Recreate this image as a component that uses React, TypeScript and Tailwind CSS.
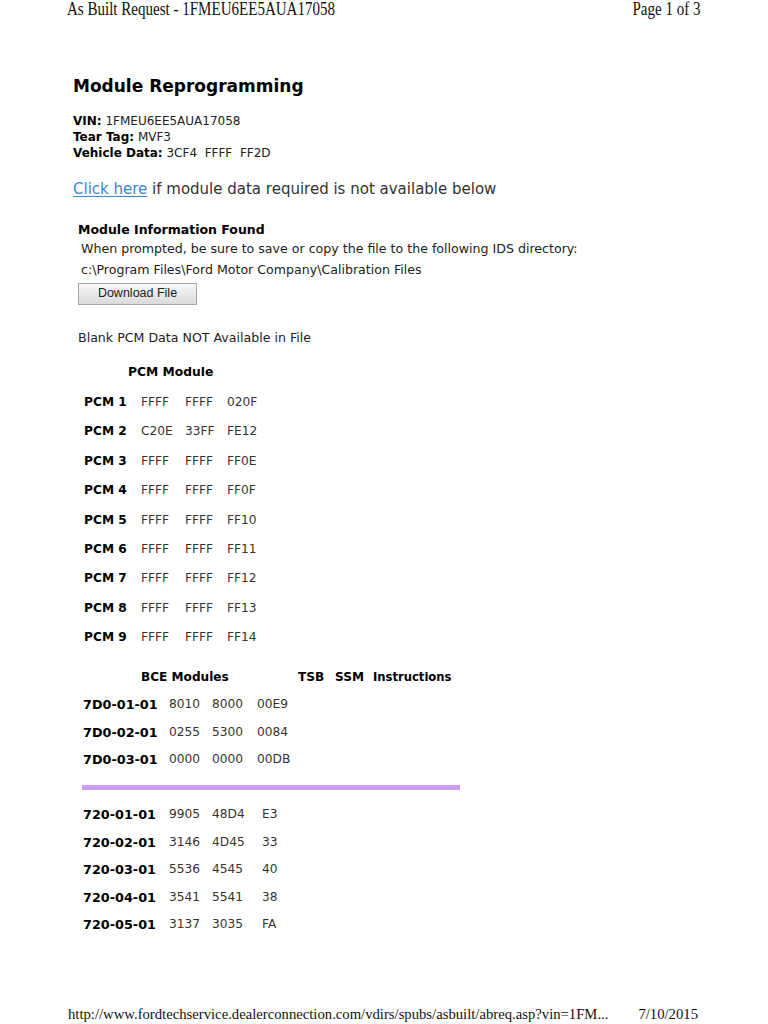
const pcmRows: [string, string, string, string][] = [
  ["PCM 1", "FFFF", "FFFF", "020F"],
  ["PCM 2", "C20E", "33FF", "FE12"],
  ["PCM 3", "FFFF", "FFFF", "FF0E"],
  ["PCM 4", "FFFF", "FFFF", "FF0F"],
  ["PCM 5", "FFFF", "FFFF", "FF10"],
  ["PCM 6", "FFFF", "FFFF", "FF11"],
  ["PCM 7", "FFFF", "FFFF", "FF12"],
  ["PCM 8", "FFFF", "FFFF", "FF13"],
  ["PCM 9", "FFFF", "FFFF", "FF14"]
];

const bceRows: [string, string, string, string][] = [
  ["7D0-01-01", "8010", "8000", "00E9"],
  ["7D0-02-01", "0255", "5300", "0084"],
  ["7D0-03-01", "0000", "0000", "00DB"]
];

const rcmRows: [string, string, string, string][] = [
  ["720-01-01", "9905", "48D4", "E3"],
  ["720-02-01", "3146", "4D45", "33"],
  ["720-03-01", "5536", "4545", "40"],
  ["720-04-01", "3541", "5541", "38"],
  ["720-05-01", "3137", "3035", "FA"]
];

export default function App() {
  return (
    <div className="flex h-[1024px] w-[768px] flex-col overflow-hidden bg-white font-['DejaVu_Sans',sans-serif] text-[#222]">
      {/* print header */}
      <div className="flex justify-between pl-[67px] pr-[68px] font-['Liberation_Serif',serif] text-[18px] leading-[19px] text-[#111]">
        <span className="inline-block origin-left scale-x-[0.835] whitespace-nowrap">As Built Request - 1FMEU6EE5AUA17058</span>
        <span className="inline-block origin-right scale-x-[0.835] whitespace-nowrap">Page 1 of 3</span>
      </div>

      <div className="pl-[73px]">
        <h1 className="mt-[57px] text-[17px] font-bold leading-[20px] text-black">Module Reprogramming</h1>

        <div className="mt-[17px] text-[12px] leading-[16px] text-[#222]">
          <div><b className="text-black">VIN:</b> 1FMEU6EE5AUA17058</div>
          <div><b className="text-black">Tear Tag:</b> MVF3</div>
          <div><b className="text-black">Vehicle Data:</b> 3CF4&nbsp; FFFF&nbsp; FF2D</div>
        </div>

        <p className="mt-[19px] text-[15px] leading-[18px] text-[#333]">
          <a href="#" className="text-[#3d86d0] underline decoration-1 underline-offset-2">Click here</a> if module data required is not available below
        </p>

        <div className="ml-[5px] mt-[24px] text-[12.6px] text-[#222]">
          <div className="text-[12.5px] font-bold leading-[16px] text-black">Module Information Found</div>
          <div className="ml-[3px] leading-[22px]">When prompted, be sure to save or copy the file to the following IDS directory:</div>
          <div className="ml-[3px] leading-[20px]">c:\Program Files\Ford Motor Company\Calibration Files</div>
          <button
            type="button"
            className="mt-[2.5px] h-[22px] w-[119px] border border-[#a8a8a8] bg-gradient-to-b from-[#f8f8f8] to-[#dadada] font-['Liberation_Sans',sans-serif] text-[12.5px] text-[#222]"
          >
            Download File
          </button>

          <div className="mt-[25px] leading-[16px]">Blank PCM Data NOT Available in File</div>
        </div>

        <div className="ml-[55px] mt-[18px] text-[12.3px] font-bold leading-[16px] text-black">PCM Module</div>

        <div className="ml-[11px] mt-[8.5px]">
          {pcmRows.map(([label, a, b, c]) => (
            <div key={label} className="grid grid-cols-[57px_44px_42px_auto] text-[12.2px] leading-[29.4px] text-[#333]">
              <span className="text-[12.2px] font-bold text-black">{label}</span>
              <span>{a}</span>
              <span>{b}</span>
              <span>{c}</span>
            </div>
          ))}
        </div>

        <div className="mt-[16px] flex text-[12.1px] font-bold leading-[16px] text-black">
          <span className="ml-[68px] w-[157px]">BCE Modules</span>
          <span className="w-[37px]">TSB</span>
          <span className="w-[38px]">SSM</span>
          <span className="text-[11.6px]">Instructions</span>
        </div>

        <div className="ml-[10px] mt-[6.5px]">
          {bceRows.map(([label, a, b, c]) => (
            <div key={label} className="grid grid-cols-[86px_43px_45px_auto] text-[12.2px] leading-[27.5px] text-[#333]">
              <span className="text-[12.8px] font-bold text-black">{label}</span>
              <span>{a}</span>
              <span>{b}</span>
              <span>{c}</span>
            </div>
          ))}
        </div>

        <div className="ml-[9px] mt-[11px] h-[5px] w-[378px] bg-[#cc9df2]" />

        <div className="ml-[10px] mt-[11.4px]">
          {rcmRows.map(([label, a, b, c]) => (
            <div key={label} className="grid grid-cols-[86px_43px_50px_auto] text-[12.2px] leading-[27.6px] text-[#333]">
              <span className="text-[12.8px] font-bold text-black">{label}</span>
              <span>{a}</span>
              <span>{b}</span>
              <span>{c}</span>
            </div>
          ))}
        </div>
      </div>

      {/* print footer */}
      <div className="mt-auto flex justify-between pb-[1px] pl-[68px] pr-[70px] font-['Liberation_Serif',serif] text-[14.7px] leading-[18px] text-[#111]">
        <span className="whitespace-nowrap">http://www.fordtechservice.dealerconnection.com/vdirs/spubs/asbuilt/abreq.asp?vin=1FM...</span>
        <span className="whitespace-nowrap">7/10/2015</span>
      </div>
    </div>
  );
}
